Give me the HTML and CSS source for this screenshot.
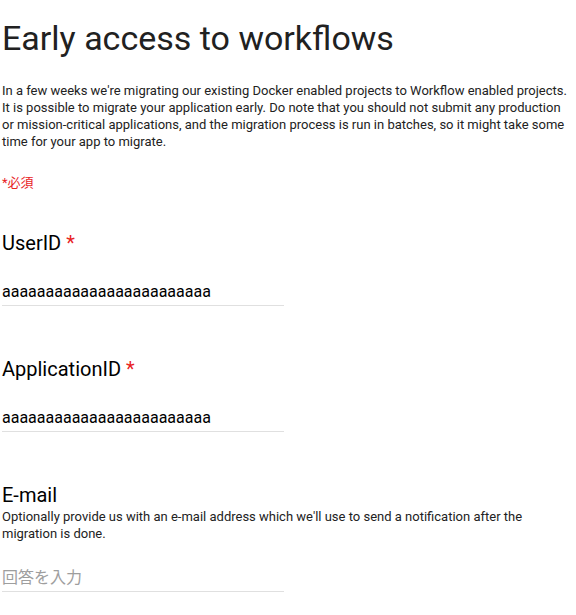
FILE: index.html
```html
<!DOCTYPE html>
<html>
<head>
    <meta charset="UTF-8">
    <title>Early access to workflows</title>
    <link rel="stylesheet" href="styles.css">
</head>
<body>
<form class="form">
    <h1 class="title">Early access to workflows</h1>
    <p class="desc">In a few weeks we're migrating our existing Docker enabled projects to Workflow enabled projects. It is possible to migrate your application early. Do note that you should not submit any production or mission-critical applications, and the migration process is run in batches, so it might take some time for your app to migrate.</p>
    <div class="required">*必須</div>

    <div class="item">
        <div class="label">UserID <span class="star">*</span></div>
        <input class="answer" type="text" name="userid" value="aaaaaaaaaaaaaaaaaaaaaaaa">
    </div>

    <div class="item">
        <div class="label">ApplicationID <span class="star">*</span></div>
        <input class="answer" type="text" name="appid" value="aaaaaaaaaaaaaaaaaaaaaaaa">
    </div>

    <div class="item">
        <div class="label">E-mail</div>
        <div class="help">Optionally provide us with an e-mail address which we'll use to send a notification after the migration is done.</div>
        <input class="answer" type="text" name="email" placeholder="回答を入力">
    </div>
</form>
</body>
</html>
```

FILE: styles.css
```css
body{
    margin: 0;
    padding: 0 2px;
    font-family: Roboto, "Noto Sans CJK JP", sans-serif;
    color: #212121;
    background: white;
}
.title{
    margin: 14px 0 0 0;
    font-size: 34px;
    font-weight: 400;
    line-height: 48px;
}
.desc{
    margin: 20px 0 0 0;
    font-size: 13px;
    line-height: 17px;
    color: #222;
}
.required{
    margin-top: 24px;
    font-size: 13px;
    line-height: 17px;
    color: #e8231f;
}
.item{
    margin-top: 50px;
}
.required + .item{
    margin-top: 39px;
}
.label{
    font-size: 20px;
    line-height: 26px;
    color: #000;
}
.star{ color: #e8231f; }
.help{
    font-size: 13px;
    line-height: 17px;
    color: #222;
}
.answer{
    display: block;
    width: 282px;
    margin-top: 22px;
    padding: 4px 0 3px 0;
    border: none;
    border-bottom: 1px solid #e0e0e0;
    outline: none;
    font-family: Roboto, "Noto Sans CJK JP", sans-serif;
    font-size: 16px;
    line-height: 20px;
    color: #000;
    background: transparent;
}
.answer::placeholder{ color: #9e9e9e; }
```
